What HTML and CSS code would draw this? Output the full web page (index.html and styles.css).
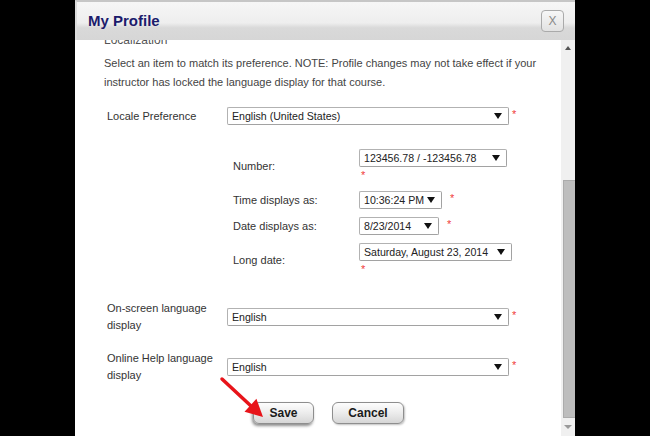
FILE: index.html
```html
<!DOCTYPE html>
<html>
<head>
<meta charset="utf-8">
<title>My Profile</title>
<link rel="stylesheet" href="styles.css">
</head>
<body>
<div class="dialog">
  <div class="header">
    <h1 class="title">My Profile</h1>
    <div class="close">X</div>
  </div>
  <div class="body">
    <div class="content">
      <div class="loc-title">Localization</div>
      <p class="intro">Select an item to match its preference. NOTE: Profile changes may not take effect if your<br>instructor has locked the language display for that course.</p>
      <div class="form">
        <div class="row locale-row">
          <div class="label">Locale Preference</div>
          <div class="ctrl">
            <div class="select w-locale"><span>English (United States)</span><i class="arrow"></i></div>
            <span class="star s-near">*</span>
          </div>
        </div>
        <div class="sub">
          <div class="subrow">
            <div class="label">Number:</div>
            <div class="ctrl stack">
              <div class="select w-number"><span>123456.78 / -123456.78</span><i class="arrow"></i></div>
              <span class="star s-below">*</span>
            </div>
          </div>
          <div class="subrow">
            <div class="label">Time displays as:</div>
            <div class="ctrl">
              <div class="select w-time"><span>10:36:24 PM</span><i class="arrow"></i></div>
              <span class="star s-far">*</span>
            </div>
          </div>
          <div class="subrow">
            <div class="label">Date displays as:</div>
            <div class="ctrl">
              <div class="select w-date"><span>8/23/2014</span><i class="arrow"></i></div>
              <span class="star s-far">*</span>
            </div>
          </div>
          <div class="subrow">
            <div class="label">Long date:</div>
            <div class="ctrl stack">
              <div class="select w-long"><span>Saturday, August 23, 2014</span><i class="arrow"></i></div>
              <span class="star s-below">*</span>
            </div>
          </div>
        </div>
        <div class="row lang-row first-lang">
          <div class="label">On-screen language<br>display</div>
          <div class="ctrl">
            <div class="select w-locale"><span>English</span><i class="arrow"></i></div>
            <span class="star s-near">*</span>
          </div>
        </div>
        <div class="row lang-row second-lang">
          <div class="label">Online Help language<br>display</div>
          <div class="ctrl">
            <div class="select w-locale"><span>English</span><i class="arrow"></i></div>
            <span class="star s-near">*</span>
          </div>
        </div>
        <div class="buttons">
          <button class="btn btn-save">Save</button>
          <button class="btn btn-cancel">Cancel</button>
        </div>
      </div>
    </div>
    <div class="scrollbar">
      <div class="sb-btn sb-up"><i class="tri-up"></i></div>
      <div class="sb-track"><div class="sb-thumb"></div></div>
      <div class="sb-btn sb-down"><i class="tri-down"></i></div>
    </div>
  </div>
  <svg class="pointer" width="60" height="50" viewBox="0 0 60 50">
    <line x1="7" y1="4" x2="36" y2="31" stroke="#e8141a" stroke-width="3.5" stroke-linecap="round"/>
    <polygon points="48,42 29.5,36.8 41.4,23.8" fill="#e8141a"/>
  </svg>
</div>
</body>
</html>
```
FILE: styles.css
```css
html, body {
  margin: 0;
  padding: 0;
}
body {
  background: #000;
  width: 650px;
  height: 436px;
  overflow: hidden;
  font-family: "Liberation Sans", Arial, sans-serif;
}
.dialog {
  position: relative;
  margin-left: 75px;
  width: 500px;
  height: 436px;
  background: #fff;
  display: flex;
  flex-direction: column;
}
.header {
  height: 40px;
  box-sizing: border-box;
  border-top: 2px solid #c6c6c6;
  border-left: 2px solid #dcdcdc;
  background: linear-gradient(to bottom, #f6f6f6 0%, #eeeeee 55%, #d9d9d9 68%, #d6d6d6 100%);
  display: flex;
  align-items: center;
  padding: 0 11px 2px 11px;
  position: relative;
  z-index: 2;
  flex: none;
}
.title {
  margin: 0;
  font-size: 15px;
  font-weight: bold;
  color: #1b1b6c;
}
.close {
  margin-left: auto;
  width: 23px;
  height: 22px;
  box-sizing: border-box;
  border: 1px solid #aaaaaa;
  border-radius: 4px;
  background: linear-gradient(to bottom, #f7f7f7, #e2e2e2);
  color: #8a8a8a;
  font-size: 12px;
  display: flex;
  align-items: center;
  justify-content: center;
  margin-top: 2px;
}
.body {
  flex: 1;
  display: flex;
  overflow: hidden;
}
.content {
  flex: 1;
  overflow: hidden;
  padding-left: 29px;
  color: #333;
  font-size: 11px;
}
.loc-title {
  font-size: 12px;
  line-height: 14px;
  color: #555;
  margin-top: -7px;
}
.intro {
  margin: 7px 0 0 0;
  font-size: 11px;
  line-height: 19px;
  color: #444;
}
.form {
  margin-left: 3px;
  margin-top: 15px;
}
.row {
  display: grid;
  grid-template-columns: 120px auto;
  align-items: center;
}
.label {
  line-height: 17px;
  color: #333;
}
.ctrl {
  display: flex;
  align-items: flex-start;
}
.ctrl.stack {
  flex-direction: column;
}
.select {
  height: 18px;
  box-sizing: border-box;
  border: 1px solid #b2b2b2;
  border-right-color: #a2a2a2;
  border-bottom-color: #a2a2a2;
  border-radius: 2px;
  background: #fff;
  display: flex;
  align-items: center;
  padding: 0 6px 0 4px;
  color: #222;
  font-size: 10.6px;
}
.select span {
  flex: 1;
  white-space: nowrap;
}
.arrow {
  width: 0;
  height: 0;
  border-left: 4px solid transparent;
  border-right: 4px solid transparent;
  border-top: 6px solid #111;
  flex: none;
}
.w-locale { width: 282px; }
.w-number { width: 148px; }
.w-time { width: 83px; }
.w-date { width: 80px; }
.w-long { width: 153px; }
.star {
  color: #f03c3c;
  font-size: 11px;
  line-height: 14px;
}
.s-near { margin-left: 3px; }
.s-far { margin-left: 8px; }
.s-below {
  margin-left: 2px;
  line-height: 16px;
  height: 16px;
}
.sub {
  margin-top: 24px;
  margin-left: 126px;
  display: flex;
  flex-direction: column;
  gap: 8px;
}
.subrow {
  display: grid;
  grid-template-columns: 126px auto;
  align-items: center;
}
.first-lang { margin-top: 23px; }
.second-lang { margin-top: 16px; }
.buttons {
  margin-top: 18px;
  padding-left: 146px;
  display: flex;
  gap: 18px;
}
.btn {
  height: 22px;
  box-sizing: border-box;
  border: 1px solid #8e8e8e;
  border-radius: 6px;
  background: linear-gradient(to bottom, #fdfdfd 0%, #ececec 50%, #d6d6d6 100%);
  font-family: "Liberation Sans", Arial, sans-serif;
  font-size: 12px;
  font-weight: bold;
  color: #1a1a1a;
  padding: 0;
  box-shadow: 1px 1px 2px rgba(0,0,0,0.25);
}
.btn-save {
  width: 61px;
  box-shadow: -1px 2px 3px rgba(0,0,0,0.45);
}
.btn-cancel { width: 72px; }
.scrollbar {
  width: 14px;
  flex: none;
  background: #f0f0f0;
  display: flex;
  flex-direction: column;
}
.sb-btn {
  height: 17px;
  display: flex;
  align-items: center;
  justify-content: center;
  flex: none;
}
.sb-down { height: 18px; }
.tri-up {
  width: 0; height: 0;
  border-left: 3.5px solid transparent;
  border-right: 3.5px solid transparent;
  border-bottom: 4px solid #555;
  margin-bottom: 2px;
}
.tri-down {
  width: 0; height: 0;
  border-left: 4px solid transparent;
  border-right: 4px solid transparent;
  border-top: 4px solid #9a9a9a;
}
.sb-track {
  flex: 1;
  display: flex;
  flex-direction: column;
  justify-content: flex-end;
}
.sb-thumb {
  height: 238px;
  margin-left: 2px;
  box-sizing: border-box;
  background: #bdbdbd;
  border: 1px solid #ababab;
  border-right: none;
}
.pointer {
  position: absolute;
  left: 140px;
  top: 375px;
  z-index: 3;
}
```
